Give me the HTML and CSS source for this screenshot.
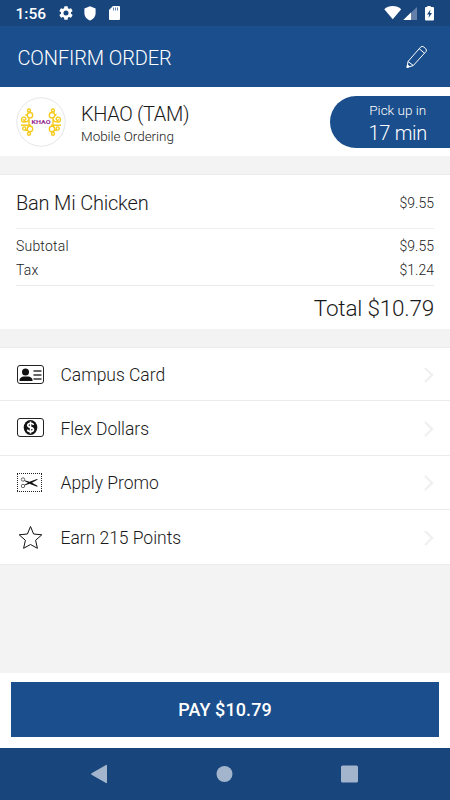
FILE: index.html
```html
<!DOCTYPE html>
<html lang="en">
<head>
<meta charset="utf-8">
<title>Confirm Order</title>
<link rel="stylesheet" href="styles.css">
</head>
<body>
<div class="app">
  <div class="status">
    <span class="clock">1:56</span>
    <svg class="gear" width="14" height="14" viewBox="2 2 20 20"><path fill="#fff" d="M19.14 12.94c.04-.3.06-.61.06-.94 0-.32-.02-.64-.07-.94l2.03-1.58a.49.49 0 0 0 .12-.61l-1.92-3.32a.49.49 0 0 0-.59-.22l-2.39.96a7.03 7.03 0 0 0-1.62-.94L14.4 2.81a.48.48 0 0 0-.48-.41h-3.84a.47.47 0 0 0-.47.41l-.36 2.54c-.59.24-1.13.57-1.62.94l-2.39-.96a.48.48 0 0 0-.59.22L2.74 8.87a.48.48 0 0 0 .12.61l2.03 1.58a6 6 0 0 0-.02 1.88l-2.03 1.58a.49.49 0 0 0-.12.61l1.92 3.32c.12.22.37.29.59.22l2.39-.96c.5.38 1.03.7 1.62.94l.36 2.54c.05.24.24.41.48.41h3.84c.24 0 .44-.17.47-.41l.36-2.54c.59-.24 1.13-.56 1.62-.94l2.39.96c.22.08.47 0 .59-.22l1.92-3.32a.49.49 0 0 0-.12-.61zM12 15.6a3.6 3.6 0 1 1 0-7.2 3.6 3.6 0 0 1 0 7.2z"/></svg>
    <svg class="shield" width="12" height="15" viewBox="0 0 12 15"><path fill="#fff" d="M6 .2 11.6 2.4V7c0 3.5-2.3 6.4-5.6 7.5C2.700 13.400.4 10.500.4 7V2.400Z"/></svg>
    <svg class="sd" width="11" height="14" viewBox="0 0 11 14"><path fill="#fff" d="M4 0h6a1 1 0 0 1 1 1v12a1 1 0 0 1-1 1H1a1 1 0 0 1-1-1V4Z"/><path stroke="#6480a8" stroke-width="1" d="M4.500 1.500v3M6.500 1.500v3M8.500 1.500v3"/></svg>
    <svg class="signals" width="52" height="16" viewBox="0 0 52 16"><path fill="#fff" d="M.3 4.200C4.500-.1 13-.1 17.200 4.200L8.750 14.300Z"/><path fill="#6480a8" d="M19.300 15 33 2v13Z"/><path fill="#fff" d="M19.300 15 27 7.500V15Z"/><path fill="#fff" d="M43.300 1h3.400v1H49a1 1 0 0 1 1 1v11.500a1 1 0 0 1-1 1h-7a1 1 0 0 1-1-1V3a1 1 0 0 1 1-1h1.300Z"/><path fill="#17457c" d="M46.500 4.500 43 9.500h2.200L44.500 13 48 8h-2.200Z"/></svg>
  </div>
  <header class="header">
    <h1>CONFIRM ORDER</h1>
    <svg width="22" height="24" viewBox="0 0 22 24" fill="none" stroke="#fff" stroke-width="1" stroke-linejoin="round"><path d="m1 22.500 1-6L14.500 2.200Q16 .5 17.800 2L19.700 3.700Q21.200 5 20 6.500L7.300 20.500Z"/><path d="m2 16.500 5.300 4M13.200 3.700l5.300 4.500"/><path fill="#fff" d="m1 22.500.5-2.500 2 1.500Z"/></svg>
  </header>
  <section class="store">
    <svg class="logo" width="50" height="50" viewBox="0 0 50 50"><circle cx="25" cy="25" r="24.200" fill="#fff" stroke="#e6e6e6"/><g id="curl" fill="none" stroke="#f5cb20" stroke-width="1.400"><path d="M5 28.200H15M13 20.500v9.500M9.500 24.500Q5.500 26 5.500 22.700q.5-3 3-2.500 2.500 1.300.5 3-1.500.3-1.500-1M9 24.800q4 .3 4-4"/><circle cx="14" cy="18.200" r="2.700"/><circle cx="14" cy="32" r="2.700"/><circle cx="13" cy="13.500" r="1.500"/><circle cx="13" cy="36.700" r="1.500"/><circle cx="8.300" cy="31.500" r="1.600"/><path d="M9.500 17.500l2 1M9 33.500l2-.5"/></g><use href="#curl" transform="matrix(-1 0 0 1 50 0)"/><text class="logo-name" x="25" y="27.300" text-anchor="middle" textLength="19" lengthAdjust="spacingAndGlyphs">KHAO</text></svg>
    <div class="store-text">
      <div class="store-name">KHAO (TAM)</div>
      <div class="store-sub">Mobile Ordering</div>
    </div>
    <div class="pickup"><span class="pick-label">Pick up in</span><span class="pick-time">17 min</span></div>
  </section>
  <section class="order">
    <div class="item"><span class="item-name">Ban Mi Chicken</span><span class="price">$9.55</span></div>
    <div class="sums">
      <div class="sum"><span class="sum-name">Subtotal</span><span class="price">$9.55</span></div>
      <div class="sum"><span class="sum-name">Tax</span><span class="price">$1.24</span></div>
    </div>
    <div class="total"><span>Total $10.79</span></div>
  </section>
  <section class="options">
    <div class="option">
      <svg class="icon" width="28" height="26" viewBox="0 0 28 26"><rect x="1.500" y="3.500" width="26" height="18" rx="2.500" fill="none" stroke="#222"/><circle cx="9.500" cy="10" r="3.500" fill="#111"/><path fill="#111" d="M3.500 19v-1q0-2.500 4-3.500h5q4 1 4 3.500v1Z"/><path stroke="#333" stroke-width="1.300" d="M17.500 9h8M17.500 13h8M17.500 17h8"/></svg>
      <span>Campus Card</span><svg class="chev" width="10" height="16" viewBox="0 0 10 16"><path d="m1 1 7 7-7 7"/></svg>
    </div>
    <div class="option">
      <svg class="icon" width="28" height="26" viewBox="0 0 28 26"><rect x="1.500" y="3.500" width="26" height="18" rx="2.500" fill="none" stroke="#222"/><ellipse cx="14.500" cy="12.500" rx="6.800" ry="7.600" fill="#111"/><path fill="none" stroke="#fff" stroke-width="1.600" d="M17.500 10Q17 8.300 14.500 8.300t-2.800 2q0 1.500 2.800 2.100t3 2.300q-.2 2-3 2t-3-2M14.500 6.500v12"/></svg>
      <span>Flex Dollars</span><svg class="chev" width="10" height="16" viewBox="0 0 10 16"><path d="m1 1 7 7-7 7"/></svg>
    </div>
    <div class="option">
      <svg class="icon" width="28" height="26" viewBox="0 0 28 26"><path fill="none" stroke="#222" stroke-dasharray="1 1" d="M1 3.500h26M1 21.500h26M1.500 4v18M25.500 4v18"/><g fill="none" stroke="#444" stroke-width=".8"><circle cx="7" cy="9.500" r="1.700"/><circle cx="7" cy="16" r="1.700"/></g><path fill="#111" d="M8.500 10.200 13.500 11.700 21 9l.8.600L16 12.800l5.800 3.200-.8.700-7.500-2.900L8.500 15.500v-.7l3.500-2L8.500 11Z"/></svg>
      <span>Apply Promo</span><svg class="chev" width="10" height="16" viewBox="0 0 10 16"><path d="m1 1 7 7-7 7"/></svg>
    </div>
    <div class="option">
      <svg class="icon" width="28" height="26" viewBox="0 0 28 26"><path fill="none" stroke="#111" stroke-width="1" stroke-linejoin="round" d="m14.500 1.500 3.100 7.500 8.200.8-6.200 5.500 1.800 8L14.500 19.500l-6.900 3.800 1.800-8-6.200-5.500 8.200-.8Z"/></svg>
      <span>Earn 215 Points</span><svg class="chev" width="10" height="16" viewBox="0 0 10 16"><path d="m1 1 7 7-7 7"/></svg>
    </div>
  </section>
  <footer class="footer"><button class="pay">PAY $10.79</button></footer>
  <nav class="nav">
    <svg width="17" height="20" viewBox="0 0 17 20"><path fill="#a3b5cc" d="M.6 9.300 15 1q1-.5 1 .6v16.800q0 1.100-1 .6L.6 10.700q-1-.7 0-1.400Z"/></svg>
    <svg width="17" height="20" viewBox="0 0 17 20"><circle cx="8.500" cy="10" r="8" fill="#a3b5cc"/></svg>
    <svg width="17" height="20" viewBox="0 0 17 20"><rect y="1.500" width="17" height="17" rx="1.500" fill="#a3b5cc"/></svg>
  </nav>
</div>
</body>
</html>
```

FILE: styles.css
```css
* { box-sizing: border-box; }
body { margin: 0; font-family: Roboto, sans-serif; font-weight: 300; color: #1a1a1a; }
.app { width: 450px; height: 800px; display: flex; flex-direction: column; background: #f3f3f3; overflow: hidden; }
svg { display: block; flex: none; }
.status { height: 26px; flex: none; background: #17457c; display: flex; align-items: center; padding: 0 14px 0 15.500px; color: #fff; }
.clock { font-size: 15.500px; font-weight: 500; width: 43px; line-height: 26px; padding-top: 1px; }
.shield { margin-left: 11px; }
.sd { margin-left: 13px; }
.signals { margin-left: auto; }
.header { height: 61px; flex: none; background: #1a4e8c; color: #fff; display: flex; align-items: center; justify-content: space-between; padding: 0 22px 0 17.500px; }
h1 { margin: 0; padding-top: 3px; font-size: 20px; font-weight: 300; line-height: 24px; letter-spacing: -.12px; }
.store { height: 69px; flex: none; background: #fff; display: flex; align-items: center; padding-left: 16px; }
.logo-name { font-size: 5.500px; font-weight: 700; fill: #942a91; }
.store-text { margin-left: 15px; padding-top: 4px; }
.store-name { font-size: 20px; line-height: 24px; letter-spacing: -.36px; }
.store-sub { font-size: 13.500px; line-height: 20px; letter-spacing: -.05px; }
.pickup { margin-left: auto; width: 120.500px; height: 52px; margin-top: 1px; background: #1a4e8c; color: #fff; border-radius: 26px 0 0 26px; display: flex; flex-direction: column; align-items: center; padding: 4px 0 0 16px; }
.pick-label { font-size: 13.500px; line-height: 21px; }
.pick-time { font-size: 20px; line-height: 24px; letter-spacing: -.3px; }
.order { margin-top: 18px; height: 155px; flex: none; background: #fff; border-top: 1px solid #ebebeb; padding: 0 16px; }
.item { height: 54px; display: flex; align-items: center; justify-content: space-between; border-bottom: 1px solid #f0f0f0; padding-top: 2px; }
.item-name { font-size: 20px; letter-spacing: -.2px; }
.price { font-size: 14px; }
.sums { height: 57px; border-bottom: 1px solid #ebebeb; padding-top: 5px; font-size: 14px; }
.sum { display: flex; justify-content: space-between; line-height: 24px; }
.sum-name { letter-spacing: .2px; }
.total { text-align: right; font-size: 22.500px; line-height: 44px; letter-spacing: -.2px; }
.options { margin-top: 18px; height: 218px; flex: none; background: #fff; border-top: 1px solid #ebebeb; display: grid; grid-template-rows: 53px repeat(3, 54.667px); }
.option { display: flex; align-items: center; padding: 2px 16px 0; border-bottom: 1px solid #ebebeb; font-size: 17.500px; letter-spacing: -.03px; }
.icon { margin: -1px 16.500px 0 0; }
.chev { margin-left: auto; }
.chev path { fill: none; stroke: #f0f0f0; stroke-width: 2.400; }
.footer { margin-top: auto; height: 75px; flex: none; background: #fff; padding: 9px 11px; }
.pay { display: block; width: 100%; height: 55px; border: 0; padding: 0; background: #1a4e8c; color: #fff; font: 500 18px Roboto, sans-serif; letter-spacing: .1px; }
.nav { height: 52px; flex: none; background: #17457c; display: flex; align-items: center; justify-content: space-between; padding: 0 92px 0 91px; }
```
